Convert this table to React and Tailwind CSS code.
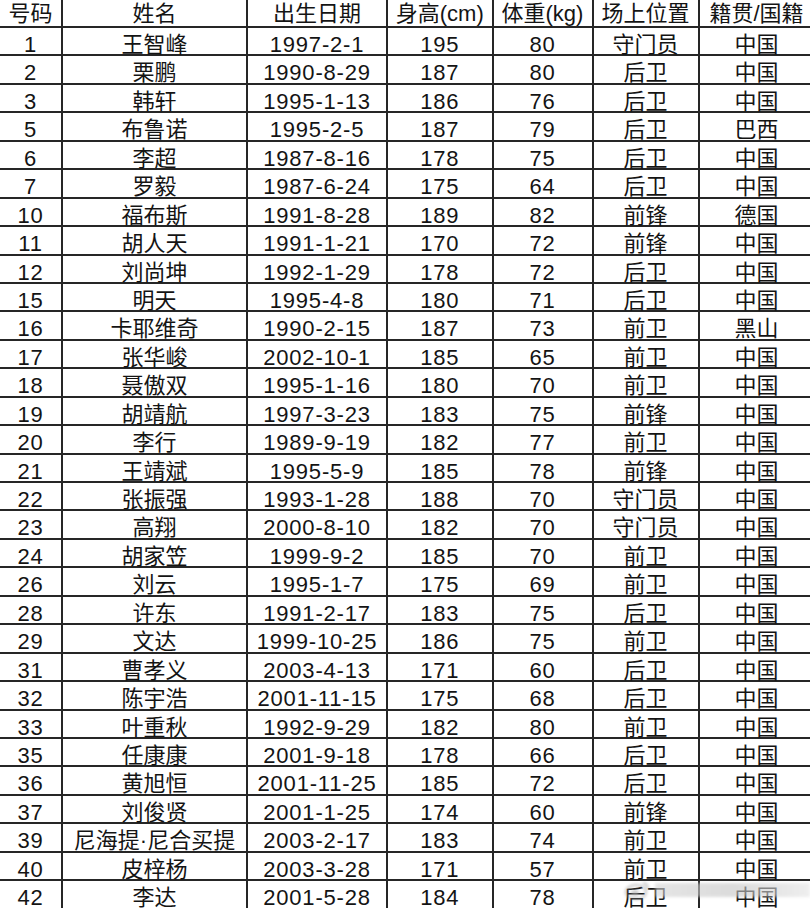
const rows = [
  ["1", "王智峰", "1997-2-1", "195", "80", "守门员", "中国"],
  ["2", "栗鹏", "1990-8-29", "187", "80", "后卫", "中国"],
  ["3", "韩轩", "1995-1-13", "186", "76", "后卫", "中国"],
  ["5", "布鲁诺", "1995-2-5", "187", "79", "后卫", "巴西"],
  ["6", "李超", "1987-8-16", "178", "75", "后卫", "中国"],
  ["7", "罗毅", "1987-6-24", "175", "64", "后卫", "中国"],
  ["10", "福布斯", "1991-8-28", "189", "82", "前锋", "德国"],
  ["11", "胡人天", "1991-1-21", "170", "72", "前锋", "中国"],
  ["12", "刘尚坤", "1992-1-29", "178", "72", "后卫", "中国"],
  ["15", "明天", "1995-4-8", "180", "71", "后卫", "中国"],
  ["16", "卡耶维奇", "1990-2-15", "187", "73", "前卫", "黑山"],
  ["17", "张华峻", "2002-10-1", "185", "65", "前卫", "中国"],
  ["18", "聂傲双", "1995-1-16", "180", "70", "前卫", "中国"],
  ["19", "胡靖航", "1997-3-23", "183", "75", "前锋", "中国"],
  ["20", "李行", "1989-9-19", "182", "77", "前卫", "中国"],
  ["21", "王靖斌", "1995-5-9", "185", "78", "前锋", "中国"],
  ["22", "张振强", "1993-1-28", "188", "70", "守门员", "中国"],
  ["23", "高翔", "2000-8-10", "182", "70", "守门员", "中国"],
  ["24", "胡家笠", "1999-9-2", "185", "70", "前卫", "中国"],
  ["26", "刘云", "1995-1-7", "175", "69", "前卫", "中国"],
  ["28", "许东", "1991-2-17", "183", "75", "后卫", "中国"],
  ["29", "文达", "1999-10-25", "186", "75", "前卫", "中国"],
  ["31", "曹孝义", "2003-4-13", "171", "60", "后卫", "中国"],
  ["32", "陈宇浩", "2001-11-15", "175", "68", "后卫", "中国"],
  ["33", "叶重秋", "1992-9-29", "182", "80", "前卫", "中国"],
  ["35", "任康康", "2001-9-18", "178", "66", "后卫", "中国"],
  ["36", "黄旭恒", "2001-11-25", "185", "72", "后卫", "中国"],
  ["37", "刘俊贤", "2001-1-25", "174", "60", "前锋", "中国"],
  ["39", "尼海提·尼合买提", "2003-2-17", "183", "74", "前卫", "中国"],
  ["40", "皮梓杨", "2003-3-28", "171", "57", "前卫", "中国"],
  ["42", "李达", "2001-5-28", "184", "78", "后卫", "中国"],
];

const header = ["号码", "姓名", "出生日期", "身高(cm)", "体重(kg)", "场上位置", "籍贯/国籍"];

// numeric columns get a little extra tracking, the sheet font is wider than Arial
const numCols = [0, 2, 3, 4];

function Row({ cells, head }) {
  return (
    <div
      className={`grid grid-cols-[63px_185px_140px_105.5px_100px_106px_116px] border-b-2 border-[#262626] ${
        head ? "h-[29px]" : "h-[28.45px]"
      }`}
    >
      {cells.map((c, i) => (
        <div
          key={i}
          className={`flex justify-center whitespace-nowrap border-r-2 border-[#262626] text-[22px] leading-[18px] ${
            head ? "pt-[6px]" : "pt-[8px]"
          } ${numCols.includes(i) && !head ? "tracking-[0.8px]" : ""}`}
        >
          {c}
        </div>
      ))}
    </div>
  );
}

export default function App() {
  return (
    <div className="relative h-[908px] w-[810px] overflow-hidden bg-white text-[#141414] font-['Liberation_Sans','Noto_Sans_CJK_SC',sans-serif]">
      <div className="-mt-px w-[820px]">
        <Row cells={header} head />
        {rows.map((r) => (
          <Row key={r[0]} cells={r} />
        ))}
      </div>

      {/* blurred weibo watermark */}
      <div className="absolute bottom-[8px] right-0 flex items-center gap-1 opacity-60 blur-[1.5px]">
        <svg width="26" height="20" viewBox="0 0 26 20">
          <ellipse cx="11" cy="12" rx="10" ry="7" fill="none" stroke="#9a9a9a" strokeWidth="2" />
          <ellipse cx="10" cy="13" rx="4" ry="3" fill="#a8a8a8" />
          <path d="M18 3 Q23 4 23 9" fill="none" stroke="#9a9a9a" strokeWidth="2" />
        </svg>
        <div className="h-[14px] w-[155px] bg-gradient-to-r from-[#d4d4d4] via-[#c4c4c4] to-[#e4e4e4]" />
      </div>
    </div>
  );
}
